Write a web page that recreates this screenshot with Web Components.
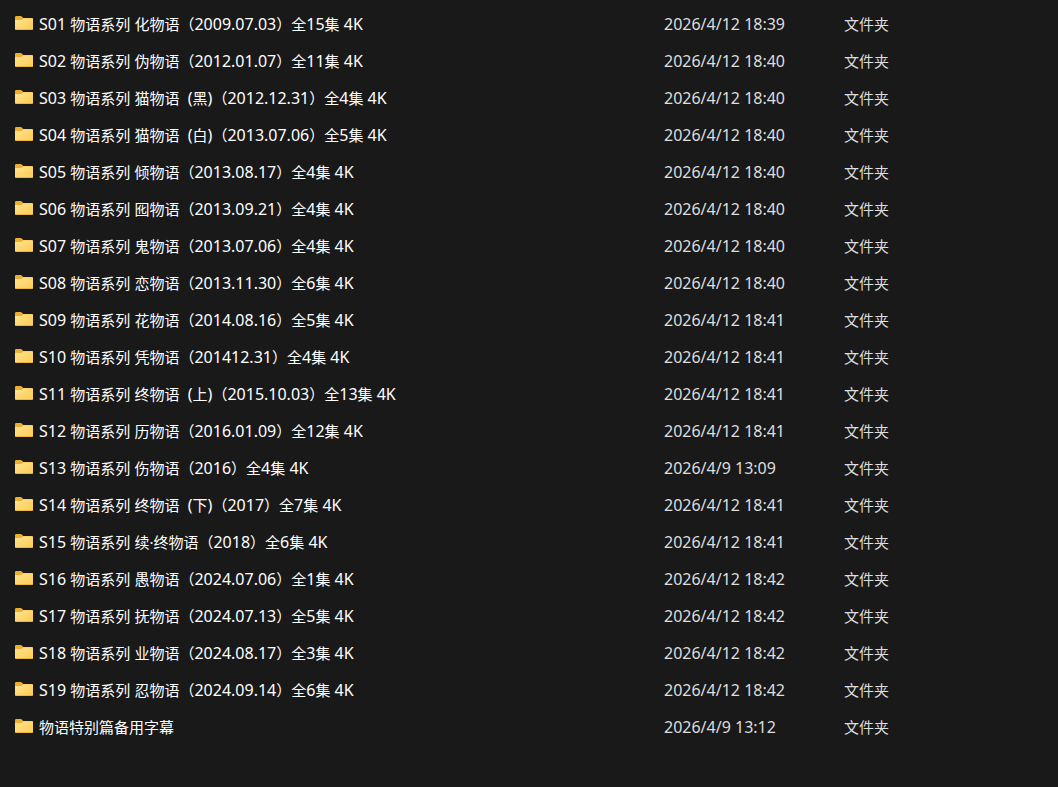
<!DOCTYPE html>
<html lang="zh-CN">
<head>
<meta charset="utf-8">
<meta name="viewport" content="width=device-width, initial-scale=1">
<title>物语系列</title>
<style>
  body {
    margin: 0;
    background: #191919;
    color: #fff;
    font-family: "Noto Sans", "Noto Sans CJK SC", sans-serif;
  }
</style>
</head>
<body>
<file-list></file-list>

<script>
class FolderIcon extends HTMLElement {
  constructor() {
    super();
    this.attachShadow({ mode: 'open' });
  }

  connectedCallback() {
    this.shadowRoot.innerHTML = `
      <style>
        :host {
          display: block;
          flex: none;
          width: 18px;
          height: 16px;
        }
        svg {
          display: block;
        }
      </style>
      <svg width="18" height="14" viewBox="0 0 18 14" aria-hidden="true">
        <defs>
          <linearGradient id="front" x1="0" y1="0" x2="1" y2="1">
            <stop offset="0" stop-color="#ffe394"/>
            <stop offset="1" stop-color="#fdcb50"/>
          </linearGradient>
        </defs>
        <path fill="#ebb02f" d="M0 1.2Q0 0 1.2 0H5.6Q6.3 0 6.8.5L8.2 2H16.8Q18 2 18 3.2V8H0Z"/>
        <path fill="url(#front)" d="M0 4H5.8Q6.5 4 7 3.5L8 2.6Q8.5 2.2 9.1 2.2H17Q18 2.2 18 3.2V13Q18 14 17 14H1Q0 14 0 13Z"/>
        <path fill="#d79a2b" d="M0 12.8Q.2 13.4 1 13.4H17Q17.8 13.4 18 12.8V13Q18 14 17 14H1Q0 14 0 13Z"/>
      </svg>
    `;
  }
}

customElements.define('folder-icon', FolderIcon);

// Text that mixes Chinese with Latin: the Latin runs are set one size larger.
class MixedText extends HTMLElement {
  constructor() {
    super();
    this.attachShadow({ mode: 'open' });
  }

  static get observedAttributes() {
    return ['text'];
  }

  attributeChangedCallback() {
    this.render();
  }

  render() {
    const text = this.getAttribute('text');
    const html = text.replace(/[ -~]+/g, '<span>$&</span>');

    this.shadowRoot.innerHTML = `
      <style>
        :host {
          display: block;
          font-size: 15px;
          line-height: 20px;
        }
        p {
          margin: 0;
          white-space: pre;
        }
        span {
          font-size: 16px;
        }
      </style>
      <p>${html}</p>
    `;
  }
}

customElements.define('mixed-text', MixedText);

const files = [
  ['S01 物语系列 化物语（2009.07.03）全15集 4K', '2026/4/12 18:39'],
  ['S02 物语系列 伪物语（2012.01.07）全11集 4K', '2026/4/12 18:40'],
  ['S03 物语系列 猫物语  (黑)（2012.12.31）全4集 4K', '2026/4/12 18:40'],
  ['S04 物语系列 猫物语  (白)（2013.07.06）全5集 4K', '2026/4/12 18:40'],
  ['S05 物语系列 倾物语（2013.08.17）全4集 4K', '2026/4/12 18:40'],
  ['S06 物语系列 囮物语（2013.09.21）全4集 4K', '2026/4/12 18:40'],
  ['S07 物语系列 鬼物语（2013.07.06）全4集 4K', '2026/4/12 18:40'],
  ['S08 物语系列 恋物语（2013.11.30）全6集 4K', '2026/4/12 18:40'],
  ['S09 物语系列 花物语（2014.08.16）全5集 4K', '2026/4/12 18:41'],
  ['S10 物语系列 凭物语（201412.31）全4集 4K', '2026/4/12 18:41'],
  ['S11 物语系列 终物语  (上)（2015.10.03）全13集 4K', '2026/4/12 18:41'],
  ['S12 物语系列 历物语（2016.01.09）全12集 4K', '2026/4/12 18:41'],
  ['S13 物语系列 伤物语（2016）全4集 4K', '2026/4/9 13:09'],
  ['S14 物语系列 终物语  (下)（2017）全7集 4K', '2026/4/12 18:41'],
  ['S15 物语系列 续·终物语（2018）全6集 4K', '2026/4/12 18:41'],
  ['S16 物语系列 愚物语（2024.07.06）全1集 4K', '2026/4/12 18:42'],
  ['S17 物语系列 抚物语（2024.07.13）全5集 4K', '2026/4/12 18:42'],
  ['S18 物语系列 业物语（2024.08.17）全3集 4K', '2026/4/12 18:42'],
  ['S19 物语系列 忍物语（2024.09.14）全6集 4K', '2026/4/12 18:42'],
  ['物语特别篇备用字幕', '2026/4/9 13:12']
];

class FileList extends HTMLElement {
  constructor() {
    super();
    this.attachShadow({ mode: 'open' });
  }

  connectedCallback() {
    this.render();
  }

  render() {
    const rows = files.map(([name, modified]) => `
      <tr>
        <td>
          <div class="name">
            <folder-icon></folder-icon>
            <mixed-text text="${name}"></mixed-text>
          </div>
        </td>
        <td class="detail"><mixed-text text="${modified}"></mixed-text></td>
        <td class="detail"><mixed-text text="文件夹"></mixed-text></td>
      </tr>
    `).join('');

    this.shadowRoot.innerHTML = `
      <style>
        :host {
          display: block;
          padding: 5px 0 40px 15px;
        }
        table {
          width: 100%;
          table-layout: fixed;
          border-collapse: collapse;
        }
        .col-modified {
          width: 180px;
        }
        .col-type {
          width: 214px;
        }
        td {
          height: 37px;
          padding: 0;
          vertical-align: middle;
        }
        .name {
          display: flex;
          align-items: center;
          gap: 6px;
        }
        .detail {
          color: #dedede;
        }
        tr:hover {
          background: #2d2d2d;
        }
      </style>
      <table aria-label="文件">
        <colgroup>
          <col>
          <col class="col-modified">
          <col class="col-type">
        </colgroup>
        <tbody>${rows}</tbody>
      </table>
    `;
  }
}

customElements.define('file-list', FileList);
</script>
</body>
</html>
